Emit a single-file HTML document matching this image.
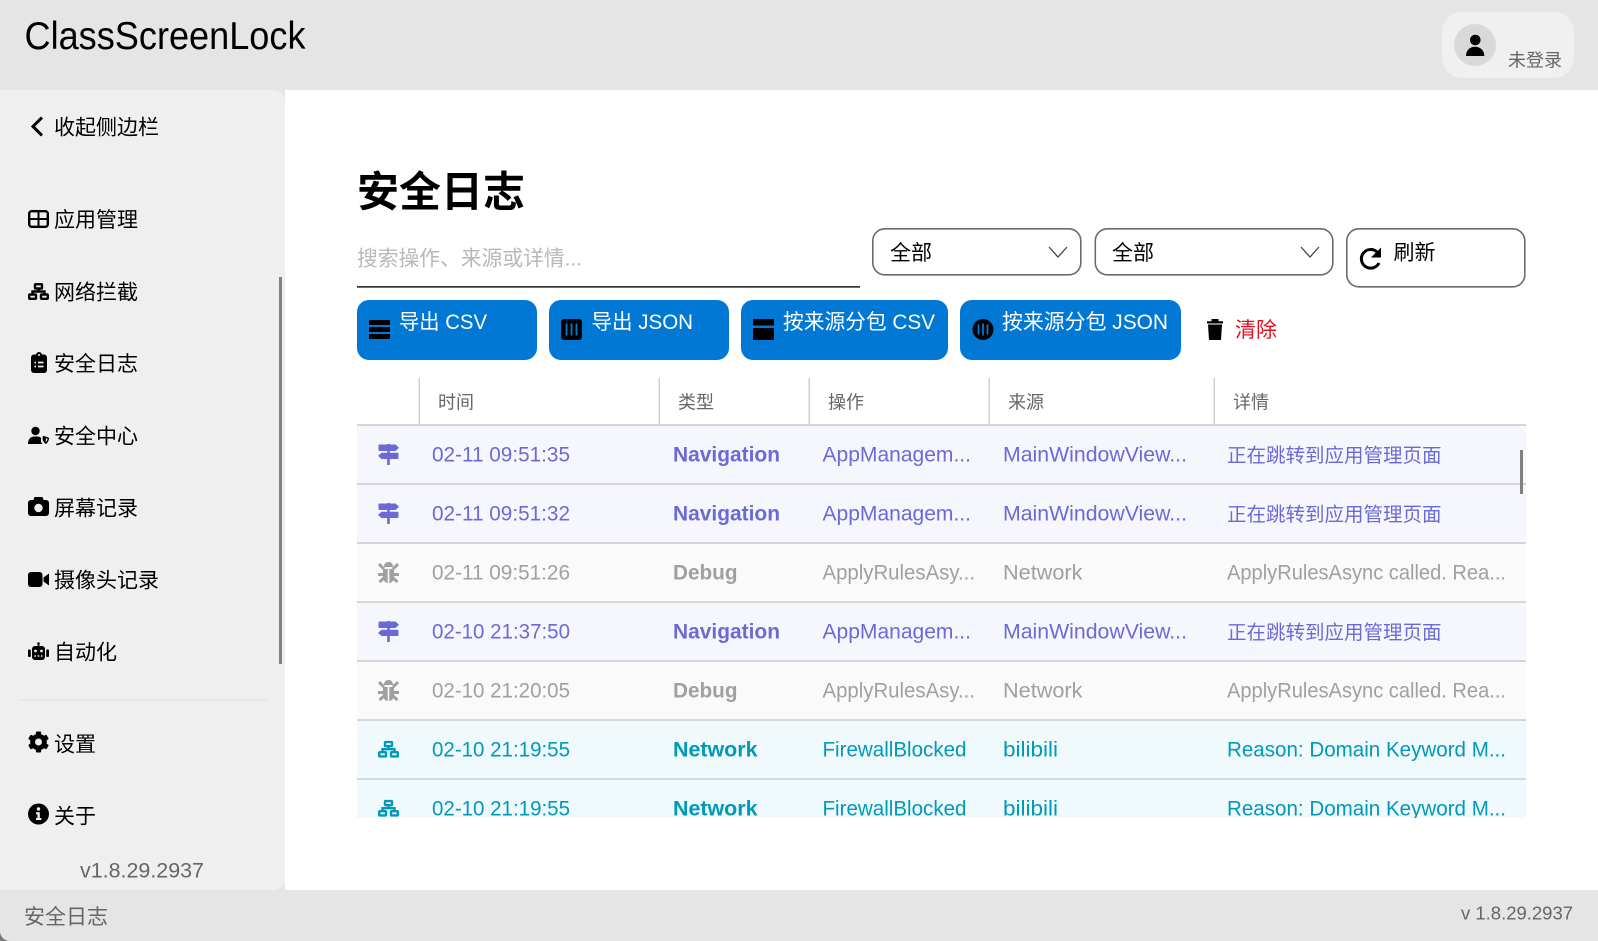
<!DOCTYPE html>
<html lang="zh-CN"><head><meta charset="utf-8"><title>ClassScreenLock</title>
<style>
html,body{margin:0;padding:0;background:#e5e5e5;overflow:hidden}
svg{display:block;position:absolute;left:0;top:0}
text{font-family:"Liberation Sans","Noto Sans CJK SC",sans-serif;font-size:21px}
.b{font-weight:700}
.nav text,.nav use{fill:#6b69d6;color:#6b69d6}
.dbg text,.dbg use{fill:#a0a0a0;color:#a0a0a0}
.net text,.net use{fill:#0099bc;color:#0099bc}
.hd{font-size:18px;fill:#666}
.d{font-size:19.5px}
</style></head><body>
<svg width="1598" height="941" viewBox="0 0 1598 941" xmlns="http://www.w3.org/2000/svg">
<defs>
<symbol id="signs" viewBox="0 0 21 21"><path fill="currentColor" d="M1.5 .5H17.5L21 3.800L17.5 7H1.5Q0.500 7 .5 6V1.500Q.5 .5 1.500 .5ZM3.500 8.800H19.500Q20.500 8.800 20.500 9.800V14Q20.500 15 19.500 15H3.500L0 11.900ZM9.200 0H11.800V1H9.200ZM9.200 7H11.800V9H9.200ZM9.200 15H11.800V21H9.200Z"/></symbol>
<symbol id="bug" viewBox="0 0 21 21"><g fill="none" stroke="currentColor" stroke-width="3"><path d="M1 2L6 7M20 2L15 7M0 12.500H6M21 12.500H15M1.500 20L6 16M19.500 20L15 16"/></g><path fill="currentColor" d="M6 5C6 1.500 8 0 10.500 0S15 1.500 15 5ZM5 7H9.700V21C7 21 5 18 5 15ZM16 7H11.300V21C14 21 16 18 16 15Z"/></symbol>
<symbol id="wired" viewBox="0 0 21 17"><g fill="none" stroke="currentColor" stroke-width="2.400"><rect x="7" y="1.200" width="7" height="4.300" rx=".8"/><rect x="1.200" y="11.500" width="6.800" height="4.300" rx=".8"/><rect x="13" y="11.500" width="6.800" height="4.300" rx=".8"/><path d="M10.500 5.500V8.500M4.500 11.500V8.500H16.500V11.500"/></g></symbol>
</defs>

<!-- window / header -->
<rect width="1598" height="941" fill="#e5e5e5"/>
<rect x="285" y="90" width="1313" height="800" fill="#fff"/>
<text x="24.500" y="49" style="font-size:39px" textLength="281" lengthAdjust="spacingAndGlyphs" fill="#000">ClassScreenLock</text>
<rect x="1442" y="12" width="132" height="66" rx="20" fill="#f0f0f0"/>
<circle cx="1475" cy="45" r="21" fill="#d9d9d9"/>
<circle cx="1475.300" cy="40" r="5.300"/>
<path d="M1466 56C1466 50 1470 46.700 1475 46.700C1480 46.700 1484.300 50 1484.300 56Z"/>
<text x="1508" y="66.500" class="hd" textLength="54" lengthAdjust="spacingAndGlyphs">未登录</text>

<!-- sidebar -->
<path d="M0 90H273A12 12 0 0 1 285 102V878A12 12 0 0 1 273 890H0Z" fill="#efefef"/>
<path d="M42 117.500L33 126.500L42 135.500" fill="none" stroke="#000" stroke-width="3"/>
<text x="54" y="134.500" textLength="105" lengthAdjust="spacingAndGlyphs">收起侧边栏</text>

<rect x="29.200" y="211.200" width="18.600" height="15.600" rx="2.500" fill="none" stroke="#000" stroke-width="2.400"/>
<path d="M38.500 211V227M29 219H48" stroke="#000" stroke-width="2"/>
<text x="54" y="227" textLength="84" lengthAdjust="spacingAndGlyphs">应用管理</text>

<use href="#wired" x="28" y="283" width="21" height="17" color="#000"/>
<text x="54" y="299.500" textLength="84" lengthAdjust="spacingAndGlyphs">网络拦截</text>

<rect x="31" y="354.500" width="16" height="18.500" rx="3"/><circle cx="39" cy="355" r="3"/>
<path d="M34.500 362.500H36M38 362.500H43.500M34.500 366.500H36M38 366.500H43.500" stroke="#efefef" stroke-width="1.700"/>
<circle cx="39" cy="355" r="1" fill="#efefef"/>
<text x="54" y="371" textLength="84" lengthAdjust="spacingAndGlyphs">安全日志</text>

<circle cx="35.500" cy="431" r="4.200"/>
<path d="M28 444C28 439 31 436.500 34 436.500H37C39 436.500 40.500 437 41 438V441C41 442 41.500 443 42.500 444Z"/>
<path d="M43 435.800L49 437.800C49 441 47.500 443 45.800 444C44 443 42.500 441 42.500 437.800Z"/>
<path d="M45.800 438.300V442C46.800 441.300 47.500 440 47.500 438.800Z" fill="#efefef"/>
<text x="54" y="443.500" textLength="84" lengthAdjust="spacingAndGlyphs">安全中心</text>

<rect x="28" y="500" width="21" height="16" rx="3"/><path d="M33 501L34.500 497H42.500L44 501Z"/><circle cx="38.500" cy="508" r="4.200" fill="#efefef"/>
<text x="54" y="515.500" textLength="84" lengthAdjust="spacingAndGlyphs">屏幕记录</text>

<rect x="28" y="572" width="14.500" height="15" rx="3"/><path d="M43.500 577.500L49 573.500V585.500L43.500 581.500Z"/>
<text x="54" y="587.500" textLength="105" lengthAdjust="spacingAndGlyphs">摄像头记录</text>

<rect x="32" y="646" width="13" height="14" rx="3"/><rect x="37.700" y="643" width="1.600" height="4"/><circle cx="38.500" cy="643.500" r="1.300"/>
<rect x="28" y="649.500" width="2.800" height="7.500" rx="1"/><rect x="46.200" y="649.500" width="2.800" height="7.500" rx="1"/>
<circle cx="35.500" cy="651" r="1.400" fill="#efefef"/><circle cx="41.500" cy="651" r="1.400" fill="#efefef"/>
<path d="M34.500 656H36M37.700 656H39.300M41 656H42.500" stroke="#efefef" stroke-width="1.400"/>
<text x="54" y="659.500" textLength="63" lengthAdjust="spacingAndGlyphs">自动化</text>

<rect x="18" y="699.300" width="249" height="1.500" fill="#e5e5e5"/>
<rect x="279" y="277" width="3" height="387" fill="#808080"/>

<g transform="translate(38.500 742)"><circle r="8.300"/><rect x="-2.600" y="-10.500" width="5.200" height="21" rx="1"/><rect x="-2.600" y="-10.500" width="5.200" height="21" rx="1" transform="rotate(60)"/><rect x="-2.600" y="-10.500" width="5.200" height="21" rx="1" transform="rotate(120)"/><circle r="3.500" fill="#efefef"/></g>
<text x="54" y="751.500" textLength="42" lengthAdjust="spacingAndGlyphs">设置</text>

<circle cx="38.500" cy="814" r="10.500"/><circle cx="38.500" cy="809" r="1.700" fill="#efefef"/><path d="M36 812.300H39.800V818H41.300V820H36V818H37.500V814.200H36Z" fill="#efefef"/>
<text x="54" y="823.500" textLength="42" lengthAdjust="spacingAndGlyphs">关于</text>

<text x="80" y="877.500" style="font-size:21.500px" fill="#666" textLength="124" lengthAdjust="spacingAndGlyphs">v1.8.29.2937</text>

<!-- title + filter -->
<text x="357" y="206.500" class="b" style="font-size:42px" textLength="168" lengthAdjust="spacingAndGlyphs">安全日志</text>
<text x="357" y="265.500" fill="#b8b8b8" textLength="225" lengthAdjust="spacingAndGlyphs">搜索操作、来源或详情...</text>
<rect x="357" y="286" width="503" height="1.700" fill="#333"/>

<rect x="872.800" y="228.800" width="208" height="46" rx="12" fill="#fff" stroke="#6b6b6b" stroke-width="1.600"/>
<text x="890" y="260" textLength="42" lengthAdjust="spacingAndGlyphs">全部</text>
<path d="M1049 247L1058 257L1067 247" fill="none" stroke="#444" stroke-width="1.300"/>
<rect x="1095.300" y="228.800" width="237.500" height="46" rx="12" fill="#fff" stroke="#6b6b6b" stroke-width="1.600"/>
<text x="1112" y="260" textLength="42" lengthAdjust="spacingAndGlyphs">全部</text>
<path d="M1301 247L1310 257L1319 247" fill="none" stroke="#444" stroke-width="1.300"/>
<rect x="1346.800" y="228.800" width="178" height="58" rx="12" fill="#fff" stroke="#6b6b6b" stroke-width="1.600"/>
<path d="M1379 263A9.300 9.300 0 1 1 1377 252" fill="none" stroke="#000" stroke-width="3"/>
<path d="M1381 247.500V257.500H1371Z"/>
<text x="1393.500" y="259.500" textLength="42" lengthAdjust="spacingAndGlyphs">刷新</text>

<!-- buttons -->
<g fill="#0078d4">
<rect x="357" y="300" width="180" height="60" rx="12"/>
<rect x="549" y="300" width="180" height="60" rx="12"/>
<rect x="741" y="300" width="207" height="60" rx="12"/>
<rect x="960" y="300" width="221" height="60" rx="12"/>
</g>
<rect x="369" y="320" width="21" height="5"/><rect x="369" y="327" width="21" height="5"/><rect x="369" y="334" width="21" height="5"/>
<rect x="561" y="319" width="21" height="21" rx="3"/><path d="M566.500 323.500V335.500M571.500 323.500V335.500M576.500 323.500V335.500" stroke="#0078d4" stroke-width="1.800"/>
<rect x="753" y="319" width="21" height="6.500"/><rect x="753" y="328" width="21" height="12"/>
<circle cx="983" cy="329.500" r="10.500"/><path d="M978.500 324.500V334.500M983 323.500V335.500M987.500 324.500V334.500" stroke="#0078d4" stroke-width="1.800"/>
<g fill="#fff">
<text x="399" y="329" textLength="88" lengthAdjust="spacingAndGlyphs">导出 CSV</text>
<text x="591.500" y="329" textLength="101.500" lengthAdjust="spacingAndGlyphs">导出 JSON</text>
<text x="783" y="329" textLength="152" lengthAdjust="spacingAndGlyphs">按来源分包 CSV</text>
<text x="1002" y="329" textLength="166" lengthAdjust="spacingAndGlyphs">按来源分包 JSON</text>
</g>
<path d="M1207 321.200H1223V323.500H1207ZM1211.500 319H1218.500V321.200H1211.500ZM1208 324.500H1222L1221 340H1209Z"/>
<text x="1235" y="337" fill="#e81123" textLength="42" lengthAdjust="spacingAndGlyphs">清除</text>

<!-- table header -->
<g fill="#cfcfcf">
<rect x="418.500" y="378" width="1.500" height="47"/><rect x="658.500" y="378" width="1.500" height="47"/><rect x="808.500" y="378" width="1.500" height="47"/><rect x="988.500" y="378" width="1.500" height="47"/><rect x="1213.500" y="378" width="1.500" height="47"/>
</g>
<text x="438" y="408.500" class="hd" textLength="36" lengthAdjust="spacingAndGlyphs">时间</text>
<text x="678" y="408.500" class="hd" textLength="36" lengthAdjust="spacingAndGlyphs">类型</text>
<text x="828" y="408.500" class="hd" textLength="36" lengthAdjust="spacingAndGlyphs">操作</text>
<text x="1008" y="408.500" class="hd" textLength="36" lengthAdjust="spacingAndGlyphs">来源</text>
<text x="1233" y="408.500" class="hd" textLength="36" lengthAdjust="spacingAndGlyphs">详情</text>

<clipPath id="tb"><rect x="357" y="424" width="1169" height="394"/></clipPath>
<g clip-path="url(#tb)">
<rect x="357" y="424.200" width="1169" height="1.700" fill="#cfcfcf"/>

<g class="nav"><rect x="357" y="426" width="1169" height="58" fill="#f6f7fd"/><rect x="357" y="483.200" width="1169" height="1.700" fill="#cdcdd3"/>
<use href="#signs" x="378" y="444" width="21" height="21"/>
<text x="432" y="461.500" textLength="138" lengthAdjust="spacingAndGlyphs">02-11 09:51:35</text>
<text x="673" y="461.500" class="b" textLength="107" lengthAdjust="spacingAndGlyphs">Navigation</text>
<text x="822.500" y="461.500" textLength="148.500" lengthAdjust="spacingAndGlyphs">AppManagem...</text>
<text x="1003" y="461.500" textLength="184" lengthAdjust="spacingAndGlyphs">MainWindowView...</text>
<text x="1227" y="462" class="d" textLength="214.500" lengthAdjust="spacingAndGlyphs">正在跳转到应用管理页面</text></g>

<g class="nav" transform="translate(0 59)"><rect x="357" y="426" width="1169" height="58" fill="#f6f7fd"/><rect x="357" y="483.200" width="1169" height="1.700" fill="#cdcdd3"/>
<use href="#signs" x="378" y="444" width="21" height="21"/>
<text x="432" y="461.500" textLength="138" lengthAdjust="spacingAndGlyphs">02-11 09:51:32</text>
<text x="673" y="461.500" class="b" textLength="107" lengthAdjust="spacingAndGlyphs">Navigation</text>
<text x="822.500" y="461.500" textLength="148.500" lengthAdjust="spacingAndGlyphs">AppManagem...</text>
<text x="1003" y="461.500" textLength="184" lengthAdjust="spacingAndGlyphs">MainWindowView...</text>
<text x="1227" y="462" class="d" textLength="214.500" lengthAdjust="spacingAndGlyphs">正在跳转到应用管理页面</text></g>

<g class="dbg" transform="translate(0 118)"><rect x="357" y="426" width="1169" height="58" fill="#fafafa"/><rect x="357" y="483.200" width="1169" height="1.700" fill="#cfcfcf"/>
<use href="#bug" x="378" y="444" width="21" height="21"/>
<text x="432" y="461.500" textLength="138" lengthAdjust="spacingAndGlyphs">02-11 09:51:26</text>
<text x="673" y="461.500" class="b" textLength="64.500" lengthAdjust="spacingAndGlyphs">Debug</text>
<text x="822.500" y="461.500" textLength="152.500" lengthAdjust="spacingAndGlyphs">ApplyRulesAsy...</text>
<text x="1003" y="461.500" textLength="79.500" lengthAdjust="spacingAndGlyphs">Network</text>
<text x="1227" y="461.500" textLength="279" lengthAdjust="spacingAndGlyphs">ApplyRulesAsync called. Rea...</text></g>

<g class="nav" transform="translate(0 177)"><rect x="357" y="426" width="1169" height="58" fill="#f6f7fd"/><rect x="357" y="483.200" width="1169" height="1.700" fill="#cdcdd3"/>
<use href="#signs" x="378" y="444" width="21" height="21"/>
<text x="432" y="461.500" textLength="138" lengthAdjust="spacingAndGlyphs">02-10 21:37:50</text>
<text x="673" y="461.500" class="b" textLength="107" lengthAdjust="spacingAndGlyphs">Navigation</text>
<text x="822.500" y="461.500" textLength="148.500" lengthAdjust="spacingAndGlyphs">AppManagem...</text>
<text x="1003" y="461.500" textLength="184" lengthAdjust="spacingAndGlyphs">MainWindowView...</text>
<text x="1227" y="462" class="d" textLength="214.500" lengthAdjust="spacingAndGlyphs">正在跳转到应用管理页面</text></g>

<g class="dbg" transform="translate(0 236)"><rect x="357" y="426" width="1169" height="58" fill="#fafafa"/><rect x="357" y="483.200" width="1169" height="1.700" fill="#cfcfcf"/>
<use href="#bug" x="378" y="444" width="21" height="21"/>
<text x="432" y="461.500" textLength="138" lengthAdjust="spacingAndGlyphs">02-10 21:20:05</text>
<text x="673" y="461.500" class="b" textLength="64.500" lengthAdjust="spacingAndGlyphs">Debug</text>
<text x="822.500" y="461.500" textLength="152.500" lengthAdjust="spacingAndGlyphs">ApplyRulesAsy...</text>
<text x="1003" y="461.500" textLength="79.500" lengthAdjust="spacingAndGlyphs">Network</text>
<text x="1227" y="461.500" textLength="279" lengthAdjust="spacingAndGlyphs">ApplyRulesAsync called. Rea...</text></g>

<g class="net" transform="translate(0 295)"><rect x="357" y="426" width="1169" height="58" fill="#f0f9fb"/><rect x="357" y="483.200" width="1169" height="1.700" fill="#cad4d7"/>
<use href="#wired" x="378" y="445.700" width="21" height="17"/>
<text x="432" y="461.500" textLength="138" lengthAdjust="spacingAndGlyphs">02-10 21:19:55</text>
<text x="673" y="461.500" class="b" textLength="84.500" lengthAdjust="spacingAndGlyphs">Network</text>
<text x="822.500" y="461.500" textLength="144" lengthAdjust="spacingAndGlyphs">FirewallBlocked</text>
<text x="1003" y="461.500" textLength="55" lengthAdjust="spacingAndGlyphs">bilibili</text>
<text x="1227" y="461.500" textLength="279" lengthAdjust="spacingAndGlyphs">Reason: Domain Keyword M...</text></g>

<g class="net" transform="translate(0 354)"><rect x="357" y="426" width="1169" height="58" fill="#f0f9fb"/>
<use href="#wired" x="378" y="445.700" width="21" height="17"/>
<text x="432" y="461.500" textLength="138" lengthAdjust="spacingAndGlyphs">02-10 21:19:55</text>
<text x="673" y="461.500" class="b" textLength="84.500" lengthAdjust="spacingAndGlyphs">Network</text>
<text x="822.500" y="461.500" textLength="144" lengthAdjust="spacingAndGlyphs">FirewallBlocked</text>
<text x="1003" y="461.500" textLength="55" lengthAdjust="spacingAndGlyphs">bilibili</text>
<text x="1227" y="461.500" textLength="279" lengthAdjust="spacingAndGlyphs">Reason: Domain Keyword M...</text></g>
</g>
<rect x="1520" y="450" width="3" height="44" fill="#808080"/>

<!-- footer -->
<text x="24" y="924" fill="#666" textLength="84" lengthAdjust="spacingAndGlyphs">安全日志</text>
<text x="1461" y="919.500" style="font-size:18.500px" fill="#666" textLength="112" lengthAdjust="spacingAndGlyphs">v 1.8.29.2937</text>
<path d="M0 931V941H10A10 10 0 0 1 0 931Z" fill="#777"/>
</svg>
</body></html>
